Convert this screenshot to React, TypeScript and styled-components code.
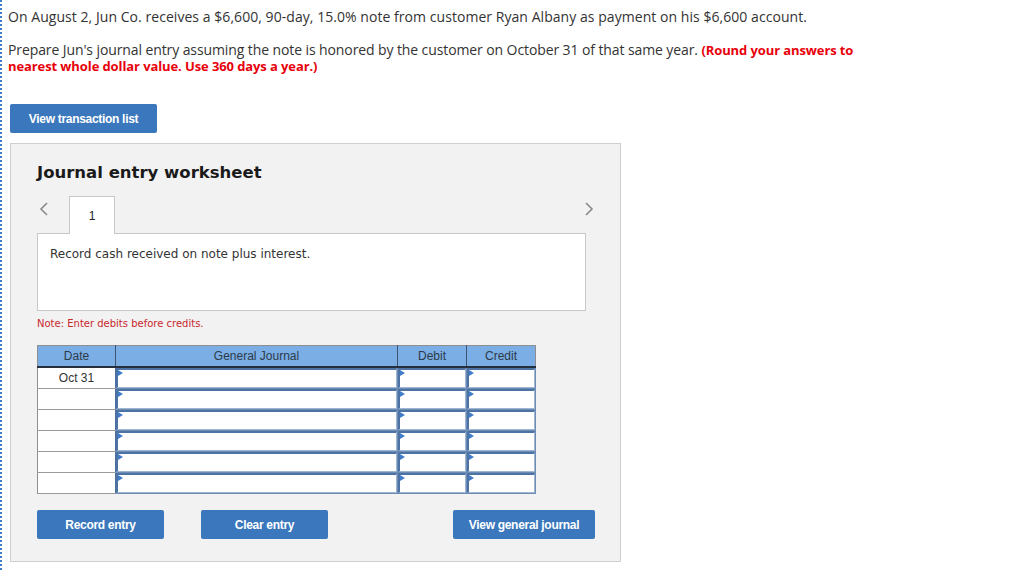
import styled, { createGlobalStyle } from 'styled-components'

const GlobalStyle = createGlobalStyle`
  html, body {
    margin: 0;
    padding: 0;
    background: #fff;
  }
`

const rows = ['Oct 31', '', '', '', '', '']

function Chevron ({ dir }: { dir: 'left' | 'right' }): JSX.Element {
  return (
    <svg width='10' height='14' viewBox='0 0 10 14'>
      <path
        d={dir === 'left' ? 'M8 1 L2 7 L8 13' : 'M2 1 L8 7 L2 13'}
        fill='none'
        stroke='#8a8a8a'
        strokeWidth='1.6'
      />
    </svg>
  )
}

export default function App (): JSX.Element {
  return <Page>
    <GlobalStyle />
    <Question>
      On August 2, Jun Co. receives a $6,600, 90-day, 15.0% note from customer Ryan Albany as payment on his $6,600 account.
    </Question>
    <Instruction>
      Prepare Jun's journal entry assuming the note is honored by the customer on October 31 of that same year. <Warn>(Round your answers to</Warn>
      <br />
      <Warn>nearest whole dollar value. Use 360 days a year.)</Warn>
    </Instruction>
    <TopButton>View transaction list</TopButton>
    <Worksheet>
      <Title>Journal entry worksheet</Title>
      <TabRow>
        <ArrowBtn><Chevron dir='left' /></ArrowBtn>
        <Tab>1</Tab>
        <Spacer />
        <ArrowBtn><Chevron dir='right' /></ArrowBtn>
      </TabRow>
      <Description>Record cash received on note plus interest.</Description>
      <Note>Note: Enter debits before credits.</Note>
      <Journal>
        <colgroup>
          <col style={{ width: 78 }} />
          <col style={{ width: 282 }} />
          <col style={{ width: 69 }} />
          <col style={{ width: 69 }} />
        </colgroup>
        <thead>
          <tr>
            <Head>Date</Head>
            <Head>General Journal</Head>
            <Head>Debit</Head>
            <Head>Credit</Head>
          </tr>
        </thead>
        <tbody>
          {rows.map((date, i) => (
            <tr key={i}>
              <DateCell>{date}</DateCell>
              <InputCell><Field /></InputCell>
              <InputCell><Field /></InputCell>
              <InputCell><Field /></InputCell>
            </tr>
          ))}
        </tbody>
      </Journal>
      <Actions>
        <ActionButton width={127}>Record entry</ActionButton>
        <ActionButton width={127}>Clear entry</ActionButton>
        <Spacer />
        <ActionButton width={142}>View general journal</ActionButton>
      </Actions>
    </Worksheet>
  </Page>
}

const Page = styled.div`
  min-height: 570px;
  box-sizing: border-box;
  border-left: 2px dotted #3f7cc9;
  padding: 8px 0 0 6px;
  font-family: "Open Sans", "Liberation Sans", sans-serif;
  color: #333;
`

const Question = styled.p`
  margin: 0;
  font-size: 14px;
  line-height: 18px;
  letter-spacing: 0.05px;
`

const Instruction = styled.p`
  margin: 16px 0 0;
  font-size: 14px;
  line-height: 16px;
  width: 900px;
  letter-spacing: -0.1px;
`

const Warn = styled.span`
  color: #e8000b;
  font-weight: 700;
  font-size: 13px;
`

const BlueButton = styled.button`
  height: 29px;
  border: none;
  border-radius: 2px;
  background: #3a77bc;
  color: #fff;
  font-family: "Liberation Sans", Arial, sans-serif;
  font-weight: 700;
  font-size: 12px;
  letter-spacing: -0.3px;
  padding: 0;
  cursor: pointer;
`

const TopButton = styled(BlueButton)`
  display: block;
  width: 147px;
  margin: 30px 0 0 2px;
`

const Worksheet = styled.section`
  box-sizing: border-box;
  width: 611px;
  height: 419px;
  margin: 10px 0 0 2px;
  background: #f2f2f2;
  border: 1px solid #cfcfcf;
  padding: 19px 0 0 26px;
  font-family: "DejaVu Sans", Verdana, sans-serif;
`

const Title = styled.h2`
  margin: 0;
  font-size: 16.5px;
  line-height: 20px;
  font-weight: 700;
  color: #1a1a1a;
`

const TabRow = styled.div`
  display: flex;
  align-items: flex-end;
  width: 557px;
  height: 38px;
  margin-top: 12px;
`

const ArrowBtn = styled.div`
  box-sizing: border-box;
  height: 100%;
  display: flex;
  align-items: flex-start;
  padding-top: 7px;
  &:first-child {
    padding-left: 2px;
    width: 30px;
  }
  &:last-child {
    justify-content: flex-end;
    width: 40px;
  }
`

const Tab = styled.div`
  box-sizing: border-box;
  width: 46px;
  height: 38px;
  margin-left: 2px;
  background: #fff;
  border: 1px solid #c8c8c8;
  border-bottom: none;
  position: relative;
  top: 1px;
  display: flex;
  align-items: center;
  justify-content: center;
  font-family: "Liberation Sans", Arial, sans-serif;
  font-size: 12px;
  color: #222;
`

const Spacer = styled.div`
  flex: 1;
`

const Description = styled.div`
  box-sizing: border-box;
  width: 549px;
  height: 78px;
  background: #fff;
  border: 1px solid #c8c8c8;
  padding: 12px 12px;
  font-size: 12px;
  line-height: 16px;
  color: #333;
`

const Note = styled.div`
  margin-top: 6px;
  font-size: 10px;
  line-height: 13px;
  color: #c9282d;
`

const Journal = styled.table`
  margin-top: 15px;
  width: 498px;
  border-collapse: collapse;
  table-layout: fixed;
  border: 1px solid #8f8f8f;
  font-family: "Liberation Sans", Arial, sans-serif;
  font-size: 12px;
`

const Head = styled.th`
  height: 20px;
  padding: 0;
  background: #7aaee4;
  color: #2d3a4a;
  font-weight: 400;
  border-left: 1px solid #3f5470;
  border-bottom: 2px solid #26303c;
  &:first-child { border-left: none; }
`

const DateCell = styled.td`
  height: 20px;
  padding: 0;
  background: #fff;
  text-align: center;
  color: #333;
  border-bottom: 1px solid #9a9a9a;
  border-right: 1px solid #4a6e9e;
`

const InputCell = styled.td`
  height: 20px;
  padding: 0;
  background: #fff;
  border: 1px solid #6e8db5;
`

const Field = styled.div`
  position: relative;
  box-sizing: border-box;
  height: 20px;
  border-top: 2px solid #4d72a4;
  border-left: 2px solid #4d72a4;
  border-right: 1px solid #9fb6d3;
  border-bottom: 1px solid #9fb6d3;
  background: #fff;
  &::before {
    content: '';
    position: absolute;
    left: 0;
    top: 0;
    border-left: 5px solid #3f7cc9;
    border-top: 3px solid transparent;
    border-bottom: 3px solid transparent;
  }
`

const Actions = styled.div`
  display: flex;
  gap: 37px;
  width: 558px;
  margin-top: 16px;
`

const ActionButton = styled(BlueButton)<{ width: number }>`
  width: ${p => p.width}px;
`
